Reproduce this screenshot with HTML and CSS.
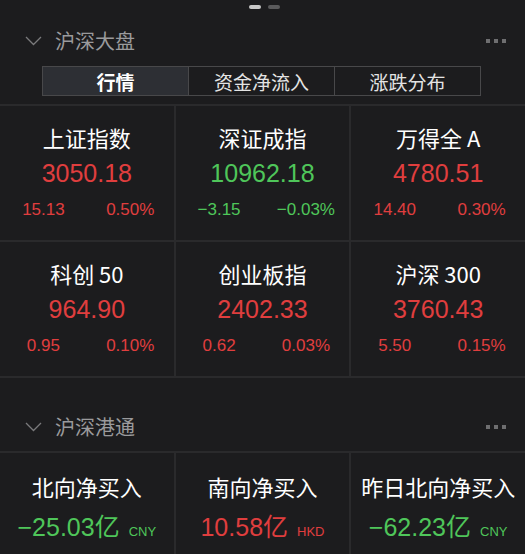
FILE: index.html
```html
<!DOCTYPE html>
<html lang="zh">
<head>
<meta charset="utf-8">
<link rel="stylesheet" href="styles.css">
</head>
<body>
<div class="pager"><span class="pdot active"></span><span class="pdot"></span></div>

<div class="head">
  <svg class="chev" width="17" height="10" viewBox="0 0 17 10"><path d="M1 1 L8.5 8.5 L16 1" fill="none" stroke="#7a7a7c" stroke-width="1.3"/></svg>
  <span class="head-title">沪深大盘</span>
  <span class="more"><i></i><i></i><i></i></span>
</div>

<div class="tabs">
  <div class="tab active">行情</div>
  <div class="tab">资金净流入</div>
  <div class="tab">涨跌分布</div>
</div>

<div class="grid">
  <div class="cell">
    <div class="name">上证指数</div>
    <div class="val up">3050.18</div>
    <div class="sub up"><span>15.13</span><span>0.50%</span></div>
  </div>
  <div class="cell">
    <div class="name">深证成指</div>
    <div class="val down">10962.18</div>
    <div class="sub down"><span>−3.15</span><span>−0.03%</span></div>
  </div>
  <div class="cell">
    <div class="name">万得全 A</div>
    <div class="val up">4780.51</div>
    <div class="sub up"><span>14.40</span><span>0.30%</span></div>
  </div>
  <div class="cell">
    <div class="name">科创 50</div>
    <div class="val up">964.90</div>
    <div class="sub up"><span>0.95</span><span>0.10%</span></div>
  </div>
  <div class="cell">
    <div class="name">创业板指</div>
    <div class="val up">2402.33</div>
    <div class="sub up"><span>0.62</span><span>0.03%</span></div>
  </div>
  <div class="cell">
    <div class="name">沪深 300</div>
    <div class="val up">3760.43</div>
    <div class="sub up"><span>5.50</span><span>0.15%</span></div>
  </div>
</div>

<div class="head head2">
  <svg class="chev" width="17" height="10" viewBox="0 0 17 10"><path d="M1 1 L8.5 8.5 L16 1" fill="none" stroke="#7a7a7c" stroke-width="1.3"/></svg>
  <span class="head-title">沪深港通</span>
  <span class="more"><i></i><i></i><i></i></span>
</div>

<div class="grid grid2">
  <div class="cell cell2">
    <div class="name">北向净买入</div>
    <div class="val2 down">−25.03<span class="yi">亿</span><span class="cur">CNY</span></div>
  </div>
  <div class="cell cell2">
    <div class="name">南向净买入</div>
    <div class="val2 up">10.58<span class="yi">亿</span><span class="cur">HKD</span></div>
  </div>
  <div class="cell cell2">
    <div class="name">昨日北向净买入</div>
    <div class="val2 down">−62.23<span class="yi">亿</span><span class="cur">CNY</span></div>
  </div>
</div>
</body>
</html>
```

FILE: styles.css
```css
html, body {
  margin: 0;
  padding: 0;
  background: #1c1c1e;
  font-family: "Noto Sans CJK SC", "Liberation Sans", sans-serif;
  color: #fff;
  overflow: hidden;
}

.pager {
  height: 20px;
  display: flex;
  justify-content: center;
  gap: 7px;
  padding: 5px 0 0 3px;
  box-sizing: border-box;
}
.pdot {
  width: 12px;
  height: 4px;
  border-radius: 2px;
  background: #5a5a5c;
}
.pdot.active {
  background: #c8c8c8;
}

.head {
  height: 42px;
  display: flex;
  align-items: center;
  padding: 0 19px 0 25px;
}
.chev {
  display: block;
  margin-right: 13px;
}
.head-title {
  font-size: 20px;
  color: #9a9a9c;
  line-height: 28px;
}
.more {
  margin-left: auto;
  display: flex;
  gap: 4px;
}
.more i {
  display: block;
  width: 4px;
  height: 4px;
  background: #6e6e70;
}

.tabs {
  margin: 4px 44px 0 42px;
  height: 30px;
  display: flex;
  border: 1px solid #48484a;
  box-sizing: border-box;
}
.tab {
  flex: 1;
  display: flex;
  align-items: center;
  justify-content: center;
  font-size: 19px;
  color: #e4e4e4;
  border-left: 1px solid #48484a;
}
.tab:first-child {
  border-left: none;
}
.tab.active {
  background: #2d2f34;
  color: #fff;
  font-weight: 700;
}

.grid {
  margin-top: 8px;
  display: grid;
  grid-template-columns: 1fr 1fr 1fr;
  gap: 2px;
  background: #2a2a2c;
  border-top: 2px solid #2a2a2c;
  border-bottom: 2px solid #2a2a2c;
}
.cell {
  background: #1c1c1e;
  padding: 16px 0 19px;
  display: flex;
  flex-direction: column;
  align-items: center;
}
.name {
  font-size: 22px;
  line-height: 30px;
  color: #fff;
}
.val {
  margin-top: 5px;
  font-family: "Liberation Sans", sans-serif;
  font-size: 25px;
  line-height: 32px;
}
.sub {
  margin-top: 9px;
  align-self: stretch;
  display: grid;
  grid-template-columns: 1fr 1fr;
  font-family: "Liberation Sans", sans-serif;
  font-size: 17px;
  line-height: 23px;
  text-align: center;
}
.up { color: #e03e3e; }
.down { color: #4fc65a; }

.head2 {
  margin-top: 28px;
  margin-bottom: 3px;
}

.grid2 {
  margin-top: 0;
  border-bottom: none;
}
.cell2 {
  padding: 18px 0 20px;
}
.val2 {
  margin-top: 8px;
  font-family: "Liberation Sans", sans-serif;
  font-size: 25px;
  line-height: 32px;
  white-space: nowrap;
}
.yi {
  font-family: "Noto Sans CJK SC", sans-serif;
  font-size: 25px;
}
.cur {
  font-size: 13px;
  margin-left: 9px;
}
```
